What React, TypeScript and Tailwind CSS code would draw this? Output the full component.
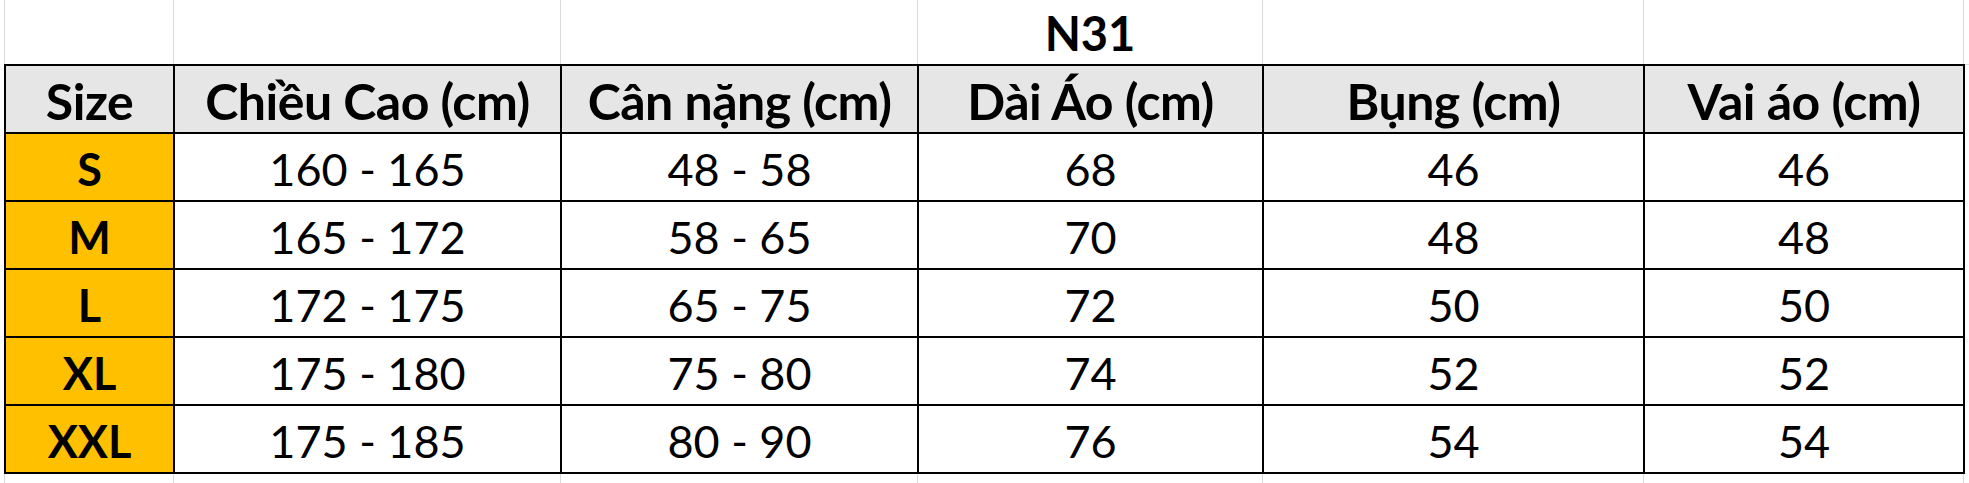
import React from "react";

const cols = ["w-[169px]", "w-[387px]", "w-[357px]", "w-[345px]", "w-[381px]", "w-[320px]"];

const headers = ["Size", "Chiều Cao (cm)", "Cân nặng (cm)", "Dài Áo (cm)", "Bụng (cm)", "Vai áo (cm)"];

const rows = [
    ["S", "160 - 165", "48 - 58", "68", "46", "46"],
    ["M", "165 - 172", "58 - 65", "70", "48", "48"],
    ["L", "172 - 175", "65 - 75", "72", "50", "50"],
    ["XL", "175 - 180", "75 - 80", "74", "52", "52"],
    ["XXL", "175 - 185", "80 - 90", "76", "54", "54"],
];

// empty sheet strip with the faint excel gridlines
const GridStrip = ({ height, children }: { height: string; children?: React.ReactNode }) => (
    <div className={`flex ${height}`}>
        <div className="w-[4px] shrink-0" />
        {cols.map((w, i) => (
            <div
                key={i}
                className={`${w} shrink-0 border-l border-[#dadada] flex items-center justify-center pt-[3px]`}
            >
                {i === 3 ? children : null}
            </div>
        ))}
        <div className="w-[4px] shrink-0 border-l border-[#dadada]" />
    </div>
);

const App = () => {
    return (
        <div className="w-[1969px] h-[483px] bg-white overflow-hidden text-black font-['Lato','Liberation_Sans',sans-serif]">
            <GridStrip height="h-[64px]">
                <span className="text-[47px] font-bold leading-none">N31</span>
            </GridStrip>
            <div className="flex">
                <div className="w-[4px] shrink-0" />
                <div className="flex flex-col border-l-2 border-t-2 border-black">
                    <div className="flex h-[68px] bg-[#e7e6e6]">
                        {headers.map((h, i) => (
                            <div
                                key={h}
                                className={`${cols[i]} shrink-0 border-r-2 border-b-2 border-black flex items-center justify-center pt-[4px] text-[50px] font-bold leading-none tracking-[-0.5px]`}
                            >
                                {h}
                            </div>
                        ))}
                    </div>
                    {rows.map((r) => (
                        <div key={r[0]} className="flex h-[68px]">
                            {r.map((v, i) => (
                                <div
                                    key={i}
                                    className={`${cols[i]} shrink-0 border-r-2 border-b-2 border-black flex items-center justify-center pt-[4px] text-[45px] leading-none ${
                                        i === 0 ? "bg-[#ffc000] font-bold" : "bg-white"
                                    }`}
                                >
                                    {v}
                                </div>
                            ))}
                        </div>
                    ))}
                </div>
                <div className="flex-1 border-t border-[#dadada]" />
            </div>
            <GridStrip height="h-[9px]" />
        </div>
    );
};

export default App;
